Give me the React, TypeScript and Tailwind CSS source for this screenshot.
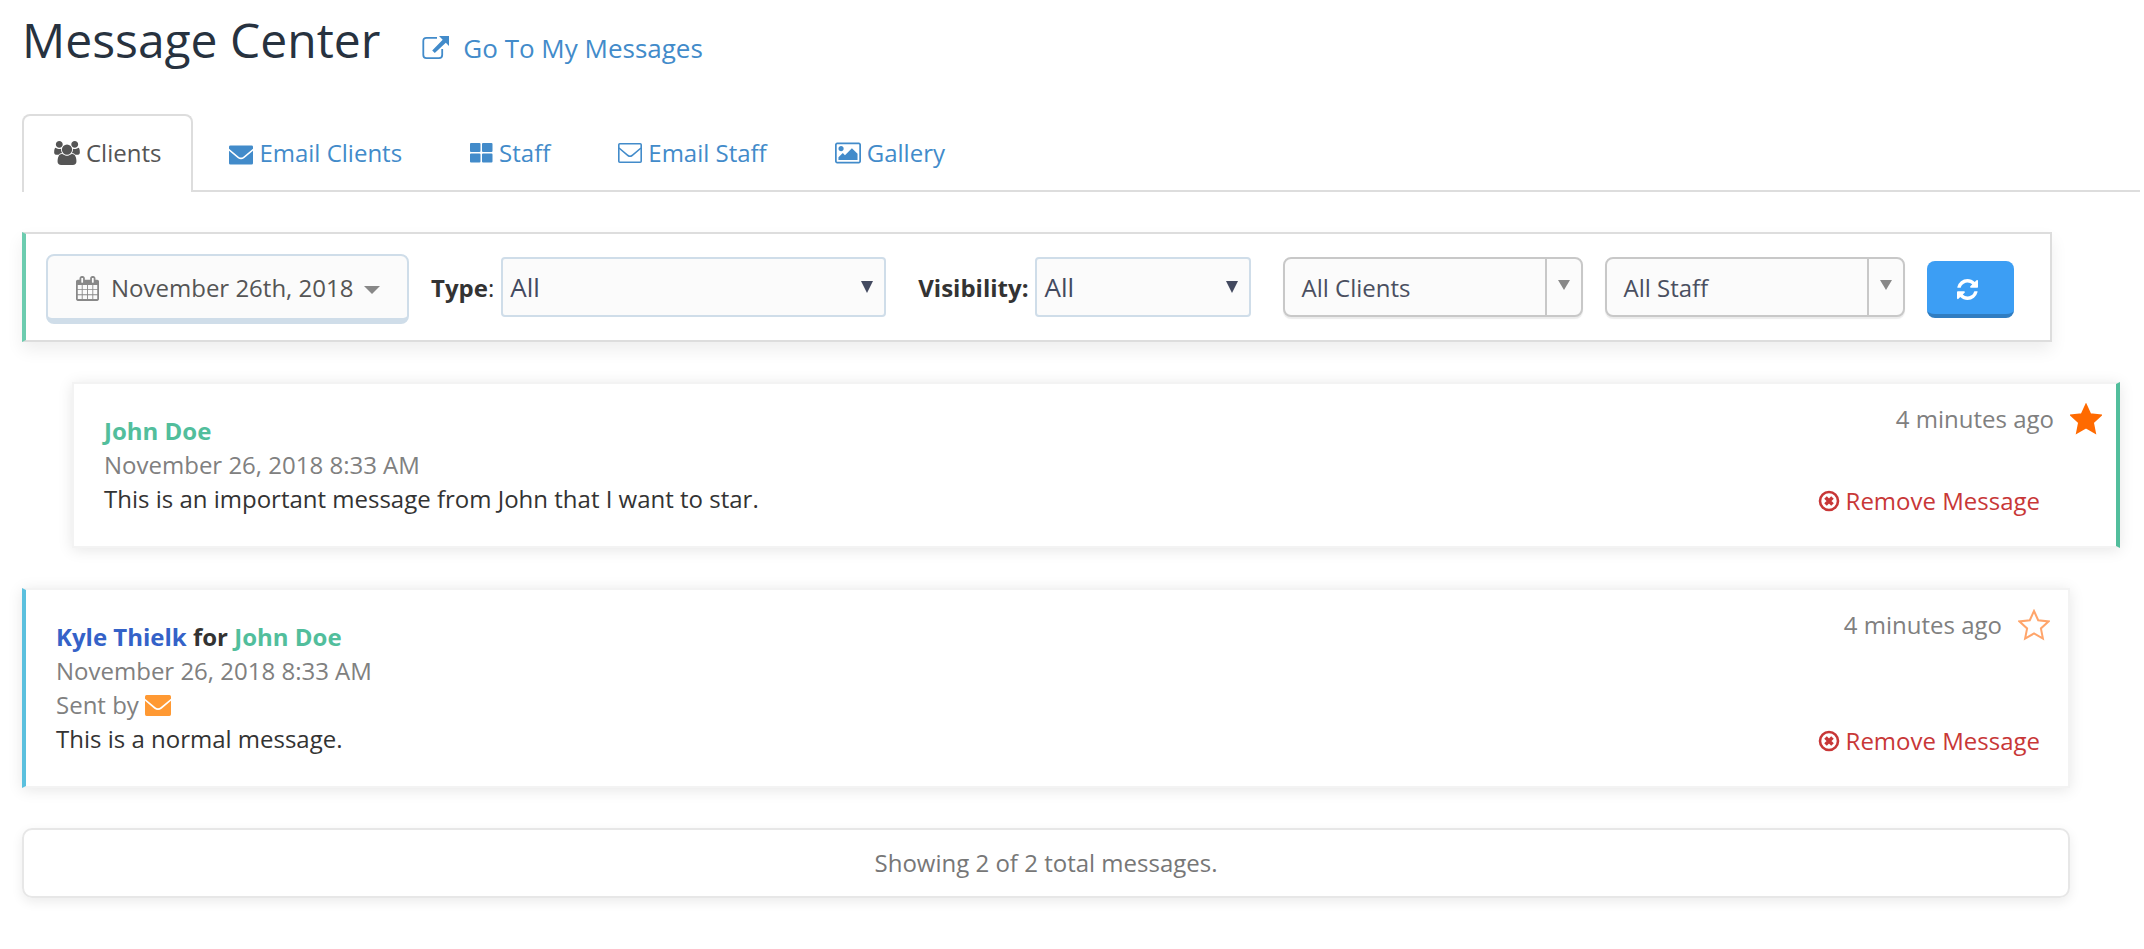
import { useState } from "react";

type IconProps = { d: string; box?: string; className?: string };

const icons = {
  external: "M15 2.800H4.500Q1.300 2.800 1.300 6v14q0 3.200 3.200 3.200H17q3.200 0 3.200-3.200v-6",
  users: "M593 896q-162 5-265 128h-134q-82 0-138-40.500t-56-118.500q0-353 124-353 6 0 43.500 21t97.500 42.500 119 21.500q67 0 133-23-5 37-5 66 0 139 81 256zm1071 637q0 120-73 189.500t-194 69.500h-874q-121 0-194-69.500t-73-189.500q0-53 3.500-103.500t14-109 26.500-108.500 43-97.500 62-81 85.500-53.500 111.500-20q10 0 43 21.500t73 48 107 48 135 21.500 135-21.500 107-48 73-48 43-21.500q61 0 111.500 20t85.500 53.500 62 81 43 97.500 26.500 108.500 14 109 3.500 103.500zm-1024-1277q0 106-75 181t-181 75-181-75-75-181 75-181 181-75 181 75 75 181zm704 384q0 159-112.500 271.500t-271.500 112.500-271.500-112.500-112.500-271.500 112.500-271.500 271.500-112.500 271.500 112.500 112.500 271.500zm576 225q0 78-56 118.500t-138 40.500h-134q-103-123-265-128 81-117 81-256 0-29-5-66 66 23 133 23 59 0 119-21.500t97.500-42.500 43.500-21q124 0 124 353zm-128-609q0 106-75 181t-181 75-181-75-75-181 75-181 181-75 181 75 75 181z",
  envelope: "M1.500 0h22Q25 0 25 1.500V3.500l-10 8.200q-2.500 1.900-5 0L0 3.500V1.500Q0 0 1.500 0zM0 5.500l9 7.600q3.500 2.600 7 0l9-7.600V18.500q0 1.500-1.500 1.500h-22Q0 20 0 18.500z",
  grid: "M1 0h8.500q1 0 1 1v7q0 1-1 1H1q-1 0-1-1V1q0-1 1-1zM13 0h8.500q1 0 1 1v7q0 1-1 1H13q-1 0-1-1V1q0-1 1-1zM1 10.500h8.500q1 0 1 1v7q0 1-1 1H1q-1 0-1-1v-7q0-1 1-1zM13 10.500h8.500q1 0 1 1v7q0 1-1 1H13q-1 0-1-1v-7q0-1 1-1z",
  image: "M576 576q0 80-56 136t-136 56-136-56-56-136 56-136 136-56 136 56 56 136zm1024 384v448h-1408v-192l320-320 160 160 512-512zm96-704h-1600q-13 0-22.500 9.500t-9.500 22.500v1216q0 13 9.500 22.500t22.500 9.500h1600q13 0 22.500-9.500t9.500-22.500v-1216q0-13-9.500-22.500t-22.500-9.500zm160 32v1216q0 66-47 113t-113 47h-1600q-66 0-113-47t-47-113v-1216q0-66 47-113t113-47h1600q66 0 113 47t47 113z",
  calendar: "M192 1664h288v-288h-288v288zm352 0h320v-288h-320v288zm-352-352h288v-320h-288v320zm352 0h320v-320h-320v320zm-352-384h288v-288h-288v288zm736 736h320v-288h-320v288zm-384-736h320v-288h-320v288zm768 736h288v-288h-288v288zm-384-352h320v-320h-320v320zm-352-864v-288q0-13-9.500-22.500t-22.500-9.500h-64q-13 0-22.500 9.500t-9.500 22.500v288q0 13 9.500 22.500t22.500 9.500h64q13 0 22.500-9.500t9.500-22.500zm736 864h288v-320h-288v320zm-384-384h320v-288h-320v288zm384 0h288v-288h-288v288zm32-480v-288q0-13-9.500-22.500t-22.500-9.500h-64q-13 0-22.500 9.500t-9.500 22.500v288q0 13 9.500 22.500t22.500 9.500h64q13 0 22.500-9.500t9.500-22.500zm384-64v1280q0 52-38 90t-90 38h-1408q-52 0-90-38t-38-90v-1280q0-52 38-90t90-38h128v-96q0-66 47-113t113-47h64q66 0 113 47t47 113v96h384v-96q0-66 47-113t113-47h64q66 0 113 47t47 113v96h128q52 0 90 38t38 90z",
  refresh: "M1639 1056q0 5-1 7-64 268-268 434.500t-478 166.500q-146 0-282.500-55t-243.500-157l-129 129q-19 19-45 19t-45-19-19-45v-448q0-26 19-45t45-19h448q26 0 45 19t19 45-19 45l-137 137q71 66 161 102t187 36q134 0 250-65t186-179q11-17 53-117 8-23 30-23h192q13 0 22.500 9.500t9.500 22.500zm25-800v448q0 26-19 45t-45 19h-448q-26 0-45-19t-19-45 19-45l138-138q-148-137-349-137-134 0-250 65t-186 179q-11 17-53 117-8 23-30 23h-199q-13 0-22.500-9.500t-9.500-22.500v-7q65-268 270-434.500t480-166.500q146 0 284 55.500t245 156.500l130-129q19-19 45-19t45 19 19 45z",
};

function Icon({ d, box = "0 0 1792 1792", className }: IconProps) {
  return (
    <svg viewBox={box} className={className} fill="currentColor" aria-hidden="true">
      <path d={d} />
    </svg>
  );
}

function ExternalLink() {
  return (
    <svg viewBox="0 0 27 27" className="size-[27px]" aria-hidden="true">
      <path d={icons.external} fill="none" stroke="currentColor" strokeWidth="1.800" />
      <path d="M17 1h10v10l-3.200-3.200-11 10.200-2.600-2.600L20.700 4.700z" fill="currentColor" />
    </svg>
  );
}

function EnvelopeOutline() {
  return (
    <svg viewBox="0 0 24 20" className="h-5 w-6" fill="none" stroke="currentColor" strokeWidth="1.6" aria-hidden="true">
      <rect x="0.800" y="0.800" width="22.400" height="18.400" rx="1" />
      <path d="M1 5l9 7.500q2 1.500 4 0L23 5" />
    </svg>
  );
}

function Star({ filled }: { filled: boolean }) {
  const points = "16,2 20.200,11.200 30.500,12.400 22.900,19.400 24.900,29.600 16,24.500 7.100,29.600 9.100,19.400 1.500,12.400 11.800,11.200";
  return (
    <svg viewBox="0 0 32 32" className="size-8" aria-hidden="true" stroke="currentColor" strokeWidth="2" fill={filled ? "currentColor" : "none"}>
      <polygon points={points} />
    </svg>
  );
}

function RemoveIcon() {
  return (
    <svg viewBox="0 0 22 22" className="size-[22px]" fill="none" stroke="currentColor" aria-hidden="true">
      <circle cx="11" cy="11" r="9" strokeWidth="2.600" />
      <path d="M7.500 7.500l7 7M14.500 7.500l-7 7" strokeWidth="3.600" />
    </svg>
  );
}

const tabs = [
  { name: "Clients", icon: <Icon d={icons.users} box="0 0 1920 1792" className="h-6 w-[26px]" /> },
  { name: "Email Clients", icon: <Icon d={icons.envelope} box="0 0 25 20" className="mt-1 h-5 w-6" /> },
  { name: "Staff", icon: <Icon d={icons.grid} box="0 0 23 20" className="h-5 w-[23px]" /> },
  { name: "Email Staff", icon: <EnvelopeOutline /> },
  { name: "Gallery", icon: <Icon d={icons.image} box="-64 96 1920 1600" className="h-[22px] w-[26px]" /> },
];

function ChosenSelect({ label }: { label: string }) {
  return (
    <div className="relative h-[60px] w-[300px]">
      <select aria-label={label} className="size-full appearance-none rounded-lg border-2 border-[#c8c8c8] bg-[#fbfbfb] pl-4 pt-[2px] text-[#4a4f60] shadow-[0_2px_1px_rgba(0,0,0,0.08)]">
        <option>{label}</option>
      </select>
      <span className="pointer-events-none absolute inset-y-[2px] right-[2px] flex w-[36px] justify-center border-l-2 border-[#c8c8c8] pt-[21px]">
        <svg viewBox="0 0 12 10" className="h-[10px] w-3" fill="#888"><path d="M0 0h12L6 10z" /></svg>
      </span>
    </div>
  );
}

function PlainSelect({ id, className }: { id: string; className: string }) {
  return (
    <div className={`relative h-[60px] ${className}`}>
      <select id={id} className="size-full appearance-none rounded-sm border-2 border-[#cfdde9] bg-[#fbfbfb] pl-[7px] text-[26px] text-[#434a60]">
        <option>All</option>
      </select>
      <svg viewBox="0 0 12 12" className="pointer-events-none absolute right-[13px] top-6 size-3" fill="#434a60"><path d="M0 0h12L6 12z" /></svg>
    </div>
  );
}

function MessageActions({ starred, className }: { starred: boolean; className: string }) {
  return (
    <div className="flex flex-col items-end justify-between pb-7 pt-[18px]">
      <div className={`flex items-center gap-4 ${className}`}>
        <span className="text-[#808080]">4 minutes ago</span>
        <button type="button" aria-label="Star message" className={starred ? "text-[#ff6a00]" : "text-[#ffa56b]"}>
          <Star filled={starred} />
        </button>
      </div>
      <button type="button" className={`flex items-center gap-[6px] text-[#c83737] ${starred ? "mr-[76px]" : "mr-7"}`}>
        <RemoveIcon />
        Remove Message
      </button>
    </div>
  );
}

export default function App() {
  const [active, setActive] = useState("Clients");

  return (
    <main className="bg-white pb-[51px] pl-[22px] pr-1 font-['Open_Sans',sans-serif] text-[24px] leading-[34px] text-[#333]">
      <header className="flex items-center pt-[7px]">
        <h1 className="text-[48px] leading-[66px] text-[#27323f]">Message Center</h1>
        <a href="#messages" className="ml-[42px] mt-4 flex items-center gap-[14px] text-[26px] text-[#428bca]">
          <ExternalLink />
          Go To My Messages
        </a>
      </header>

      <nav className="mt-[41px] flex gap-1 border-b-2 border-[#ddd]">
        {tabs.map((tab) => (
          <button
            key={tab.name}
            type="button"
            onClick={() => setActive(tab.name)}
            className={`-mb-[2px] flex h-[78px] items-center gap-[6px] rounded-t-lg border-2 border-b-0 px-[30px] pb-[2px] ${active === tab.name ? "border-[#ddd] bg-white text-[#555]" : "border-transparent text-[#428bca]"}`}
          >
            {tab.icon}
            {tab.name}
          </button>
        ))}
      </nav>

      <form className="mr-[88px] mt-10 flex h-[110px] items-center border-2 border-l-4 border-[#ddd] border-l-[#6cccaf] pl-5 shadow-[0_8px_16px_rgba(0,0,0,0.07)]">
        <button type="button" className="mt-1 flex h-[70px] w-[363px] items-center rounded-lg border-2 border-b-[6px] border-[#cfdde9] bg-[#fbfbfb] pl-7 pt-[2px] text-[#555]">
          <Icon d={icons.calendar} box="64 0 1664 1792" className="mr-3 h-[25px] w-[23px] text-[#888]" />
          November 26th, 2018
          <svg viewBox="0 0 16 8" className="ml-[11px] mt-1 h-2 w-4" fill="#888"><path d="M0 0h16L8 8z" /></svg>
        </button>
        <label htmlFor="type" className="ml-[22px] mr-[7px] pt-[2px]"><strong>Type</strong>:</label>
        <PlainSelect id="type" className="w-[385px]" />
        <label htmlFor="visibility" className="ml-8 mr-[7px] pt-[2px] font-bold">Visibility:</label>
        <PlainSelect id="visibility" className="w-[216px]" />
        <div className="ml-8 flex items-center gap-[22px]">
          <ChosenSelect label="All Clients" />
          <ChosenSelect label="All Staff" />
          <button type="button" aria-label="Refresh" className="mt-1 flex h-[57px] w-[87px] items-center justify-center rounded-lg border-b-4 border-[#307dc1] bg-[#3c9ef4] pr-[6px] pt-1 text-white">
            <Icon d={icons.refresh} box="128 128 1536 1536" className="size-[21px]" />
          </button>
        </div>
      </form>

      <article className="ml-[50px] mr-5 mt-10 flex justify-between border-2 border-r-4 border-[#f3f3f3] border-r-[#52be9c] shadow-[0_2px_14px_rgba(0,0,0,0.1)]">
        <div className="py-[30px] pl-[30px]">
          <p className="font-bold text-[#52be9c]">John Doe</p>
          <p className="text-[#808080]">November 26, 2018 8:33 AM</p>
          <p>This is an important message from John that I want to star.</p>
        </div>
        <MessageActions starred className="mr-[14px]" />
      </article>

      <article className="mr-[70px] mt-10 flex justify-between border-2 border-l-4 border-[#f3f3f3] border-l-[#5bc0de] shadow-[0_2px_14px_rgba(0,0,0,0.1)]">
        <div className="py-[30px] pl-[30px]">
          <p className="font-bold"><span className="text-[#3462c8]">Kyle Thielk</span> for <span className="text-[#52be9c]">John Doe</span></p>
          <p className="text-[#808080]">November 26, 2018 8:33 AM</p>
          <p className="flex items-center gap-[6px] text-[#808080]">
            Sent by
            <Icon d={icons.envelope} box="0 0 25 20" className="h-[21px] w-[26px] text-[#ff9933]" />
          </p>
          <p>This is a normal message.</p>
        </div>
        <MessageActions starred={false} className="mr-[18px]" />
      </article>

      <p className="mr-[70px] mt-10 rounded-[10px] border-2 border-[#e7e7e7] py-4 text-center text-[#777] shadow-[0_4px_12px_rgba(0,0,0,0.08)]">
        Showing 2 of 2 total messages.
      </p>
    </main>
  );
}
